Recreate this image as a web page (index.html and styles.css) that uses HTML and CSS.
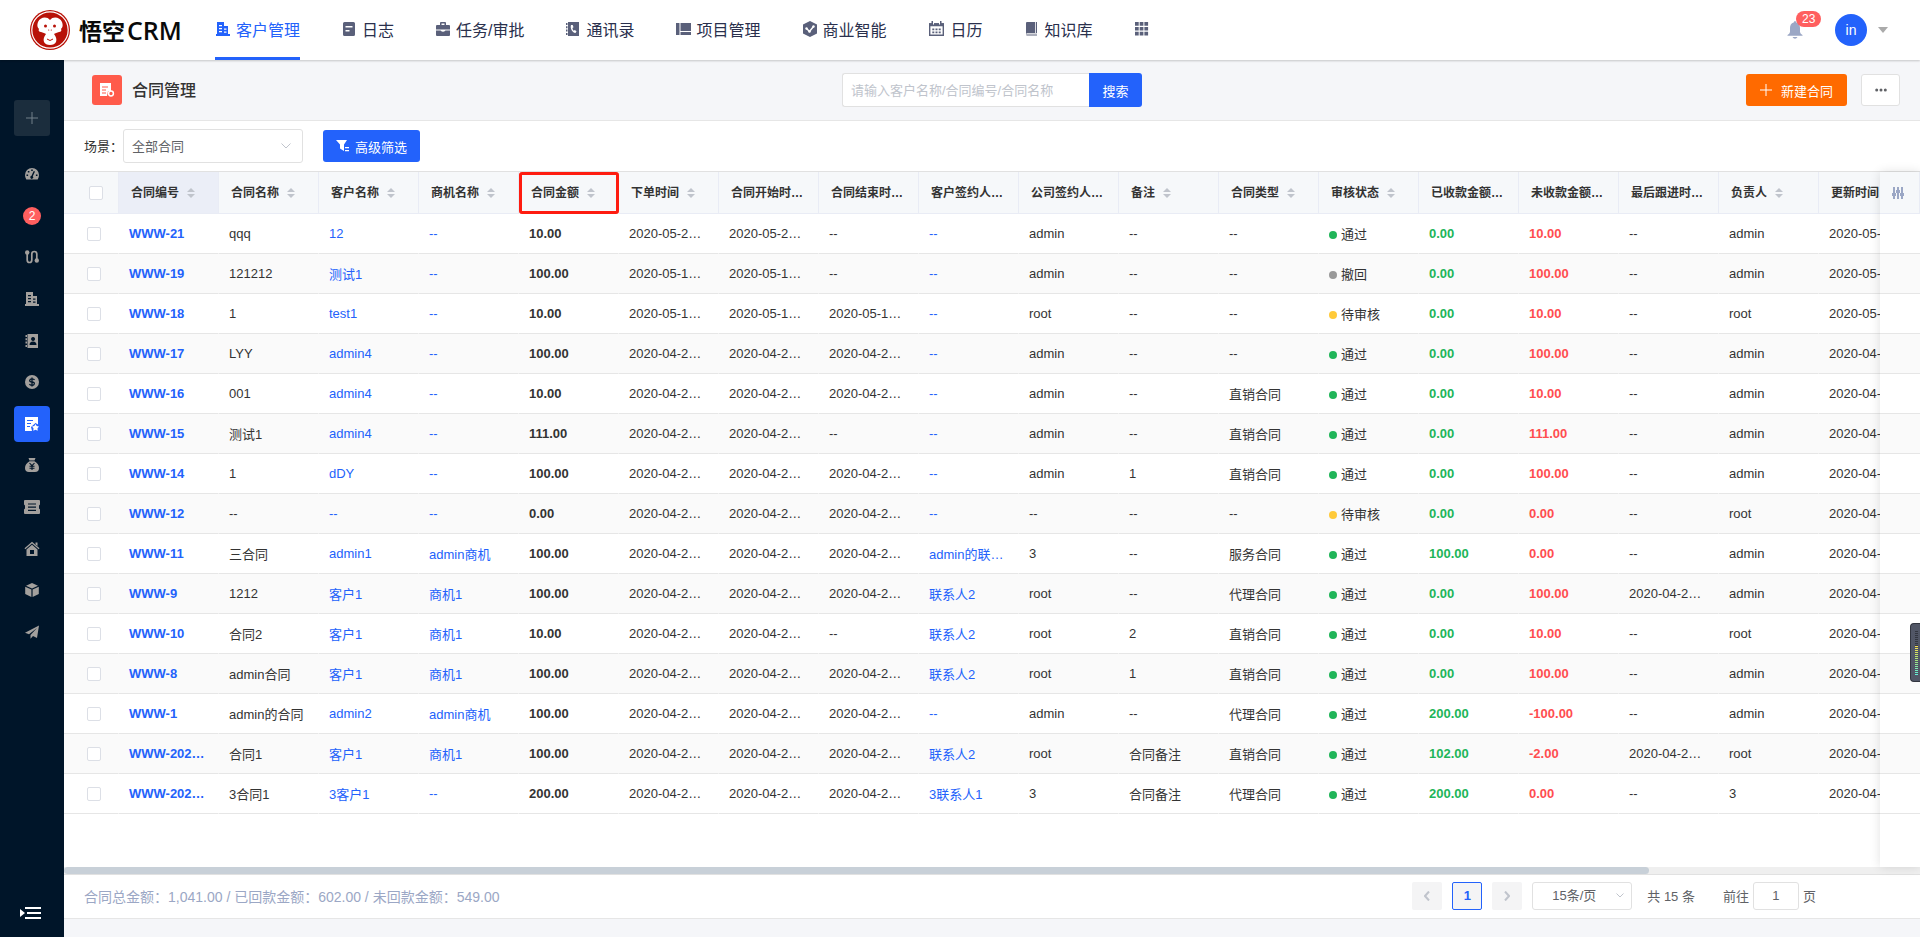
FILE: index.html
```
<!DOCTYPE html>
<html lang="zh-CN">
<head>
  <meta charset="UTF-8">
  <meta name="viewport" content="width=device-width, initial-scale=1.0">
  <title>悟空CRM - 合同管理</title>
  <link rel="stylesheet" href="styles.css">
</head>
<body>
  <header class="navbar">
    <div class="logo">
      <svg width="40" height="40" viewBox="0 0 40 40">
        <circle cx="20" cy="20" r="20" fill="#b81208"/>
        <circle cx="20" cy="20" r="18.2" fill="none" stroke="#fff" stroke-width="1.2"/>
        <path d="M20 10c-3-4-10-3-12 2-1 3-1 5 1 7-1 1 0 3 2 3 2 1 4 1 5 2-2 3-3 5-2 8 1 2 3 3 6 3s5-1 6-3c1-3 0-5-2-8 1-1 3-1 5-2 2 0 3-2 2-3 2-2 2-4 1-7-2-5-9-6-12-2z" fill="#fff"/>
        <circle cx="15.500" cy="16" r="1.500" fill="#b81208"/>
        <circle cx="24.500" cy="16" r="1.500" fill="#b81208"/>
        <circle cx="18.700" cy="20" r=".6" fill="#b81208"/>
        <circle cx="21.300" cy="20" r=".6" fill="#b81208"/>
        <path d="M17 29q3 3 6 0" fill="none" stroke="#b81208" stroke-width="1"/>
      </svg>
      <div class="logo-text">悟空<span>CRM</span></div>
    </div>
    <nav class="nav">
      <a href="#" class="nav-item active">
        <svg width="16" height="16" viewBox="0 0 16 16"><path fill-rule="evenodd" d="M2 1h7v4h4v8h2v2H1v-2h1zM4 4v1.300h3V4zm0 3v1.300h3V7zm0 3v1.300h3V10zm5-2.500v1.200h2.500V7.500zm0 3v1.200h2.500v-1.200z"/></svg>
        客户管理
      </a>
      <a href="#" class="nav-item">
        <svg width="16" height="16" viewBox="0 0 16 16"><path fill-rule="evenodd" d="M3.500 1h9q1.500 0 1.500 1.500v11q0 1.500-1.500 1.500h-9Q2 15 2 13.500v-11Q2 1 3.500 1zM4.500 5v1.500h7V5zm0 4v1.500h4V9z"/></svg>
        日志
      </a>
      <a href="#" class="nav-item">
        <svg width="16" height="16" viewBox="0 0 16 16"><path fill-rule="evenodd" d="M5 4V2q0-1 1-1h4q1 0 1 1v2h3q1 0 1 1v3.500H1V5q0-1 1-1zm1.500 0h3V2.500h-3zM1 9.500h4.500q2.500 2.500 5 0H15V14q0 1-1 1H2q-1 0-1-1z"/></svg>
        任务/审批
      </a>
      <a href="#" class="nav-item">
        <svg width="16" height="16" viewBox="0 0 16 16"><path fill-rule="evenodd" d="M3 1h11v14H3zM1 2h1.500v2H1zm0 3.300h1.500v2H1zm0 3.300h1.500v2H1zm0 3.300h1.500v2H1zM6 4c-1 3 1 7.500 4.500 8l1-1.700-1.700-1.200-1 .7C8 9 7.500 8 7.500 7l1-.7L7.700 4z"/></svg>
        通讯录
      </a>
      <a href="#" class="nav-item">
        <svg width="16" height="16" viewBox="0 0 16 16"><path d="M0 2h3.500v12H0zM4.500 2H15v8H4.500zM4.500 11H15v3H4.500z"/></svg>
        项目管理
      </a>
      <a href="#" class="nav-item">
        <svg width="16" height="16" viewBox="0 0 16 16"><path d="M8 0l7 3.500v9L8 16l-7-3.500v-9z"/><path d="M4.500 7.500l3 3 4-5" fill="none" stroke="#fff" stroke-width="1.500"/><circle cx="4.500" cy="7.500" r="1.200" fill="#fff"/><circle cx="7.500" cy="10.500" r="1.300" fill="#fff"/><circle cx="11.500" cy="5.500" r="1.200" fill="#fff"/></svg>
        商业智能
      </a>
      <a href="#" class="nav-item">
        <svg width="18" height="16" viewBox="0 0 18 16"><path d="M1.700 3h13.600v11.300H1.700z" fill="none" stroke="#5a607a" stroke-width="1.400"/><path d="M1 2.300h15v3H1zM4.300 7.500h2v1.700h-2zM7.500 7.500h2v1.700h-2zM10.700 7.500h2v1.700h-2zM4.300 10.500h2v1.700h-2zM7.500 10.500h2v1.700h-2zM10.700 10.500h2v1.700h-2zM3.500 0h1.500v3H3.500zM12 0h1.500v3H12z"/><path d="M5 1h1v2.500H5zM11 1h1v2.500h-1z" fill="#fff"/></svg>
        日历
      </a>
      <a href="#" class="nav-item">
        <svg width="16" height="16" viewBox="0 0 16 16"><path d="M3 1h8v11H3l-1 1V2q0-1 1-1zM11.800 1H13v11h-1.200z"/><path d="M2 13q0-.5 1-.5h10V15H3q-1 0-1-2z" opacity=".5"/></svg>
        知识库
      </a>
      <a href="#" class="nav-item" aria-label="更多应用">
        <svg width="16" height="16" viewBox="0 0 16 16"><path d="M1 1h3.700v3.700H1zM5.700 1h3.700v3.700H5.700zM10.400 1h3.700v3.700h-3.700zM1 5.900h3.700v3.700H1zM5.700 5.900h3.700v3.700H5.700zM10.400 5.900h3.700v3.700h-3.700zM1 10.800h3.700v3.700H1zM5.700 10.800h3.700v3.700H5.700zM10.400 10.800h3.700v3.700h-3.700z"/></svg>
      </a>
    </nav>
    <div class="user-area">
      <button class="bell" aria-label="消息">
        <svg width="16" height="18" viewBox="0 0 16 18"><path d="M8 0q1 0 1.300 1.500C12 2 13 4.500 13 7v4q.3 2 2.500 3v.800H.5V14Q2.700 13 3 11V7c0-2.500 1-5 3.700-5.500Q7 0 8 0zM5.500 16h5q-1 1.700-2.500 1.700T5.500 16z"/></svg>
        <span class="badge">23</span>
      </button>
      <div class="avatar">in</div>
      <span class="caret"></span>
    </div>
  </header>

  <div class="container">
    <aside class="sidebar">
      <button class="side-add" aria-label="新建">
        <svg width="12" height="12" viewBox="0 0 12 12"><path d="M5.500 0h1v12h-1zM0 5.500h12v1H0z"/></svg>
      </button>
      <nav class="side-menu">
        <a href="#" class="side-item" aria-label="仪表盘"><svg width="16" height="16" viewBox="0 0 16 16"><path fill-rule="evenodd" d="M8 2a7 7 0 0 1 7 7q0 2.500-1.300 4.500H2.300Q1 11.500 1 9a7 7 0 0 1 7-7zM7.200 3.500v1.500h1.600V3.500zM3.800 5v1.500h1.600V5zM2.500 8.500V10h1.600V8.500zm9.400 0V10h1.600V8.500zM9.700 5L7.500 9.800a1.500 1.500 0 1 0 1.300.4L11 5.500z"/></svg></a>
        <a href="#" class="side-item" aria-label="待办"><span class="side-badge">2</span></a>
        <a href="#" class="side-item" aria-label="线索"><svg width="16" height="16" viewBox="0 0 16 16"><circle cx="3.200" cy="3.500" r="2.200"/><circle cx="12.800" cy="11.500" r="2.200"/><path d="M3.200 4v7q0 2.500 2.300 2.500T7.800 11V5q0-2.500 2.500-2.500T12.800 5v6" fill="none" stroke="#a3a09d" stroke-width="1.700"/></svg></a>
        <a href="#" class="side-item" aria-label="客户"><svg width="16" height="16" viewBox="0 0 16 16"><path fill-rule="evenodd" d="M2 1h7v4h4v8h2v2H1v-2h1zM4 4v1.300h3V4zm0 3v1.300h3V7zm0 3v1.300h3V10zm5-2.500v1.200h2.500V7.500zm0 3v1.200h2.500v-1.200z"/></svg></a>
        <a href="#" class="side-item" aria-label="联系人"><svg width="16" height="16" viewBox="0 0 16 16"><path fill-rule="evenodd" d="M3.500 1H14v14H3.500zM1.500 2H3v2H1.500zm0 3.300H3v2H1.500zm0 3.300H3v2H1.500zm0 3.300H3v2H1.500zM9 4a2 2 0 1 0 .1 0zM5.500 12h7q0-3.500-3.500-3.500T5.500 12z"/></svg></a>
        <a href="#" class="side-item" aria-label="商机"><svg width="16" height="16" viewBox="0 0 16 16"><circle cx="8" cy="8" r="7"/><path d="M10.500 6Q10 4.800 8 4.800T5.700 6.300 8 8t2.300 1.800T8 11.300 5.500 10M8 3.500v9" fill="none" stroke="#001529" stroke-width="1.300"/></svg></a>
        <a href="#" class="side-item active" aria-label="合同"><svg width="16" height="16" viewBox="0 0 16 16"><path d="M1 1h13v7.500L11.500 7 7 11l1 4H1z"/><path d="M3 4.500h6M3 7.500h4M3 10.500h3" stroke="#2362fb" stroke-width="1.200"/><path d="M11.500 8l1.200 2 2.300.5-1.500 1.800.2 2.500-2.200-1-2.200 1 .2-2.500L8 10.500l2.300-.5z"/></svg></a>
        <a href="#" class="side-item" aria-label="回款"><svg width="16" height="16" viewBox="0 0 16 16"><path d="M4.500 1h7L10.500 3.500h-5zM5.500 4.300h5C13.500 6 15 8.500 15 11q0 4-4 4H5q-4 0-4-4c0-2.500 1.500-5 4.500-6.700z"/><path d="M5.500 6L8 8.700 10.500 6M8 8.700V13M5.500 9.200h5M5.500 11.200h5" fill="none" stroke="#001529" stroke-width="1.100"/></svg></a>
        <a href="#" class="side-item" aria-label="发票"><svg width="18" height="16" viewBox="0 0 18 16"><path d="M2 1h14q1 0 1 1v3.500l-1 1v3l1 1V14q0 1-1 1H2q-1 0-1-1v-3.500l1-1v-3l-1-1V2q0-1 1-1z"/><path d="M5 5h8M5 8.200h8M5 11.400h8" stroke="#001529" stroke-width="1.200"/></svg></a>
        <a href="#" class="side-item" aria-label="公海"><svg width="16" height="16" viewBox="0 0 16 16"><path d="M8 .8l7.500 6.500-.8 1L8 2.500 1.300 8.300l-.8-1z"/><path fill-rule="evenodd" d="M8 3.800l5.500 4.700V15h-11V8.500zM6 9v4h4V9z"/><path d="M11.500 1.500h2V5l-2-1.500z"/></svg></a>
        <a href="#" class="side-item" aria-label="产品"><svg width="16" height="16" viewBox="0 0 16 16"><path d="M8 1l6 2.700L8 6.500 2 3.700zM1.200 4.800l6.200 2.800V15l-6.200-3zM14.800 4.800L8.600 7.600V15l6.200-3z"/></svg></a>
        <a href="#" class="side-item" aria-label="营销"><svg width="16" height="16" viewBox="0 0 16 16"><path d="M15 1.500l-2 12.500-4-2-2.500 2.800V11L13 4 5 10.300 1 8.800z"/></svg></a>
      </nav>
      <button class="side-toggle" aria-label="展开菜单">
        <svg width="22" height="14" viewBox="0 0 22 14"><path d="M0 3l5 4-5 4zM5 1h16v2H5zM7 6h14v2H7zM5 11h16v2H5z"/></svg>
      </button>
    </aside>

    <main class="main">
      <div class="page-head">
        <div class="page-title">
          <span class="title-icon">
            <svg width="18" height="18" viewBox="0 0 18 18"><path d="M2 2h11v8H10l-1 5H2z" fill="#fff"/><path d="M4 6h6M4 9h4M4 12h4" stroke="#ff5b4b" stroke-width="1"/><circle cx="13" cy="12.500" r="2.400" fill="#ff5b4b" stroke="#fff" stroke-width="1.500"/></svg>
          </span>
          <h1>合同管理</h1>
        </div>
        <form class="search">
          <input type="text" placeholder="请输入客户名称/合同编号/合同名称" aria-label="搜索合同">
          <button type="button">搜索</button>
        </form>
        <div class="head-actions">
          <button class="btn btn-orange">
            <svg width="12" height="12" viewBox="0 0 12 12"><path d="M5.500 0h1v12h-1zM0 5.500h12v1H0z"/></svg>
            新建合同
          </button>
          <button class="btn btn-more" aria-label="更多">
            <svg width="12" height="4" viewBox="0 0 12 4"><circle cx="1.700" cy="2" r="1.500"/><circle cx="6" cy="2" r="1.500"/><circle cx="10.300" cy="2" r="1.500"/></svg>
          </button>
        </div>
      </div>

      <div class="filter-bar">
        <label for="scene">场景：</label>
        <div class="select-wrap scene-select">
          <select id="scene"><option>全部合同</option></select>
          <svg width="10" height="6" viewBox="0 0 10 6"><path d="M.5.5L5 5 9.500.5"/></svg>
        </div>
        <button class="btn btn-primary">
          <svg width="14" height="14" viewBox="0 0 14 14"><path d="M0 1h11L8 5.500V12L4 9.500V5.500zM9 8h4v1.300H9zM9 11h4v1.300H9z"/></svg>
          高级筛选
        </button>
      </div>

      <div class="table-area">
        <div class="table-scroll">
          <table class="contract-table">
            <thead><tr id="table-head"></tr></thead>
            <tbody id="table-body"></tbody>
          </table>
        </div>
        <div class="fixed-column">
          <div class="fixed-head">
            <svg width="14" height="14" viewBox="0 0 14 14"><path d="M2 1h2v12H2zM6 1h2v12H6zM10 1h2v12h-2zM1 7h4v3H1zM5 4h4v3H5zM9 7h4v3H9z"/></svg>
          </div>
          <div id="fixed-rows"></div>
        </div>
        <div class="scrollbar"><div class="scrollbar-thumb"></div></div>
      </div>

      <div class="table-footer">
        <div class="summary">合同总金额：1,041.00 / 已回款金额：602.00 / 未回款金额：549.00</div>
        <div class="pagination">
          <button class="page-btn" disabled aria-label="上一页"><svg width="6" height="10" viewBox="0 0 6 10"><path d="M5 .5L1 5l4 4.500"/></svg></button>
          <button class="page-btn current">1</button>
          <button class="page-btn" disabled aria-label="下一页"><svg width="6" height="10" viewBox="0 0 6 10"><path d="M1 .5L5 5 1 9.500"/></svg></button>
          <div class="select-wrap size-select">
            <select aria-label="每页条数"><option>15条/页</option></select>
            <svg width="8" height="5" viewBox="0 0 8 5"><path d="M.5.500L4 4 7.500.5"/></svg>
          </div>
          <span class="total">共 15 条</span>
          <label class="jumper">前往<input type="text" value="1">页</label>
        </div>
      </div>
    </main>
  </div>

  <div class="meter"><span class="meter-off"></span><span class="meter-on"></span></div>

  <script src="table.js"></script>
</body>
</html>
```

FILE: styles.css
```
* {
  box-sizing: border-box;
}
body {
  margin: 0;
  height: 100vh;
  display: flex;
  flex-direction: column;
  overflow: hidden;
  font-family: "Liberation Sans", "Noto Sans CJK SC", sans-serif;
  font-size: 13px;
  color: #333;
  background: #f5f6f9;
}
a {
  text-decoration: none;
  color: inherit;
}
button,
input,
select {
  font: inherit;
  color: inherit;
}
button {
  border: none;
  padding: 0;
  cursor: pointer;
}
svg {
  flex: none;
  fill: currentColor;
}

/* top bar */
.navbar {
  display: flex;
  height: 60px;
  flex: none;
  padding: 0 32px 0 30px;
  background: #fff;
  box-shadow: 0 1px 2px rgba(0, 0, 0, 0.2);
  position: relative;
  z-index: 5;
}
.logo {
  display: flex;
  align-items: center;
  gap: 9px;
  width: 185px;
}
.logo-text {
  display: flex;
  align-items: center;
  gap: 2px;
  font-family: "Noto Sans CJK SC", sans-serif;
  font-size: 23px;
  font-weight: 700;
  line-height: 30px;
  color: #0a0a0a;
}
.logo-text span {
  font-family: "Open Sans", sans-serif;
  font-size: 25px;
  font-weight: 600;
}
.nav {
  display: flex;
  gap: 41px;
}
.nav-item {
  display: flex;
  align-items: center;
  gap: 5px;
  font-size: 16px;
  color: #2a304d;
  border-bottom: 3px solid transparent;
  border-top: 1px solid transparent;
}
.nav-item svg {
  color: #5a607a;
}
.nav-item.active,
.nav-item.active svg {
  color: #2362fb;
}
.nav-item.active {
  border-bottom-color: #2362fb;
}
.user-area {
  display: flex;
  align-items: center;
  margin-left: auto;
}
.bell {
  position: relative;
  display: flex;
  margin-right: 32px;
  background: none;
  color: #9ba7c5;
}
.badge {
  position: absolute;
  left: 9px;
  top: -10px;
  height: 16px;
  padding: 0 6px;
  border-radius: 8px;
  background: #ff5f5f;
  color: #fff;
  font-size: 12px;
  line-height: 16px;
}
.avatar {
  width: 32px;
  height: 32px;
  border-radius: 50%;
  background: #2362fb;
  color: #fff;
  font-size: 14px;
  line-height: 32px;
  text-align: center;
}
.caret {
  margin-left: 11px;
  border: 5px solid transparent;
  border-top: 6px solid #aaa;
  border-bottom: 0;
}

.container {
  display: flex;
  flex: 1;
  min-height: 0;
}

/* sidebar */
.sidebar {
  display: flex;
  flex-direction: column;
  align-items: flex-start;
  width: 64px;
  flex: none;
  padding: 40px 0 17px 14px;
  background: #001529;
}
.side-add {
  display: flex;
  align-items: center;
  justify-content: center;
  width: 36px;
  height: 36px;
  margin-bottom: 20px;
  border-radius: 3px;
  background: #1b2d3d;
  color: #73808a;
}
.side-menu {
  display: flex;
  flex-direction: column;
  justify-content: space-between;
  height: 494px;
}
.side-item {
  display: flex;
  align-items: center;
  justify-content: center;
  width: 36px;
  height: 36px;
  border-radius: 4px;
  color: #a3a09d;
}
.side-item.active {
  background: #2362fb;
  color: #fff;
}
.side-badge {
  width: 18px;
  height: 18px;
  border-radius: 9px;
  background: #ff5f5f;
  color: #fff;
  font-size: 12px;
  line-height: 18px;
  text-align: center;
}
.side-toggle {
  display: flex;
  margin-top: auto;
  margin-left: 6px;
  background: none;
  color: #fff;
}

/* page head */
.main {
  display: flex;
  flex-direction: column;
  flex: 1;
  min-width: 0;
  padding-bottom: 18px;
}
.page-head {
  display: grid;
  grid-template-columns: 1fr auto 1fr;
  align-items: center;
  height: 61px;
  flex: none;
  padding: 0 20px;
  border-bottom: 1px solid #e6e6e6;
}
.page-title {
  display: flex;
  align-items: center;
  gap: 10px;
  padding-left: 8px;
}
.title-icon {
  display: flex;
  align-items: center;
  justify-content: center;
  width: 30px;
  height: 30px;
  border-radius: 3px;
  background: #ff5b4b;
}
.page-title h1 {
  margin: 0;
  padding-bottom: 2px;
  font-size: 16px;
  font-weight: 500;
}
.search {
  display: flex;
  height: 34px;
}
.search input {
  width: 247px;
  padding: 0 8px;
  border: 1px solid #e1e1e1;
  border-right: none;
  border-radius: 3px 0 0 3px;
  background: #fff;
}
.search input::placeholder {
  color: #c0c4cc;
}
.search button {
  width: 53px;
  border-radius: 0 3px 3px 0;
  background: #2362fb;
  color: #fff;
}
.head-actions {
  display: flex;
  justify-content: flex-end;
  gap: 14px;
}
.btn {
  display: flex;
  align-items: center;
  justify-content: center;
  height: 32px;
  border-radius: 3px;
  color: #fff;
}
.btn-orange {
  gap: 9px;
  width: 101px;
  background: #ff6a00;
}
.btn-more {
  width: 39px;
  border: 1px solid #e1e1e1;
  background: #fff;
  color: #606266;
}
.btn-primary {
  gap: 5px;
  width: 97px;
  background: #2362fb;
}

/* filter bar */
.filter-bar {
  display: flex;
  align-items: center;
  height: 50px;
  flex: none;
  padding-left: 20px;
  background: #fff;
}
.filter-bar label {
  width: 39px;
  padding-bottom: 2px;
}
.select-wrap {
  position: relative;
}
.select-wrap select {
  width: 100%;
  height: 100%;
  border: 1px solid #e1e1e1;
  border-radius: 3px;
  background: #fff;
  color: #606266;
  appearance: none;
}
.select-wrap svg {
  position: absolute;
  top: 50%;
  margin-top: -3px;
  fill: none;
  stroke: #c0c4cc;
  pointer-events: none;
}
.scene-select {
  width: 180px;
  height: 34px;
  margin-right: 20px;
}
.scene-select select {
  padding: 0 8px;
}
.scene-select svg {
  right: 12px;
}

/* table */
.table-area {
  position: relative;
  display: flex;
  flex-direction: column;
  flex: 1;
  min-height: 0;
  background: #fff;
  border-top: 1px solid #e1e1e1;
}
.table-scroll {
  flex: 1;
  min-height: 0;
  overflow: hidden;
}
.contract-table {
  width: 1855px;
  table-layout: fixed;
  border-spacing: 0;
}
.contract-table th,
.contract-table td {
  overflow: hidden;
  text-align: left;
  text-overflow: ellipsis;
  white-space: nowrap;
  vertical-align: middle;
}
.contract-table th {
  width: 100px;
  height: 42px;
  padding: 0 12px 3px;
  border-right: 1px solid #e9ecf5;
  border-bottom: 1px solid #e9ecf5;
  background: #f6f8fa;
  font-size: 12px;
  font-weight: 700;
}
.contract-table td {
  height: 40px;
  padding: 0 10px 1px;
  border-right: 1px solid transparent;
  border-bottom: 1px solid #e6e6e6;
}
.contract-table tr:nth-child(even) td,
.fixed-row:nth-child(even) {
  background: #fafafa;
}
.contract-table .check-cell {
  width: 55px;
  padding: 0 0 0 23px;
}
.contract-table th.check-cell {
  padding-left: 25px;
}
.contract-table th.sorted {
  background: #ebeef7;
}
.contract-table th.marked {
  position: relative;
  outline: 3px solid #fe1c10;
  outline-offset: -3px;
  border-radius: 3px;
}
.contract-table input {
  display: block;
  width: 14px;
  height: 14px;
  margin: 0;
  border: 1px solid #dcdfe6;
  border-radius: 2px;
  background: #fff;
  appearance: none;
}
.sort {
  display: inline-flex;
  flex-direction: column;
  gap: 2px;
  width: 24px;
  padding-left: 8px;
  vertical-align: middle;
}
.sort::before,
.sort::after {
  content: "";
  width: 0;
  border: 4px solid transparent;
}
.sort::before {
  border-top: 0;
  border-bottom-color: #c0c4cc;
}
.sort::after {
  border-bottom: 0;
  border-top-color: #c0c4cc;
}
.num {
  font-weight: 700;
  color: #2362fb;
}
.link {
  color: #2362fb;
}
.money {
  font-weight: 700;
}
.received {
  font-weight: 700;
  color: #20b559;
}
.unreceived {
  font-weight: 700;
  color: #ff4d4f;
}
.dot {
  display: inline-block;
  width: 8px;
  height: 8px;
  margin-right: 4px;
  border-radius: 50%;
}
.dot-pass {
  background: #20b559;
}
.dot-back {
  background: #999;
}
.dot-wait {
  background: #ffca3a;
}
.fixed-column {
  position: absolute;
  top: 0;
  right: 0;
  bottom: 7px;
  width: 40px;
  background: #fff;
  box-shadow: 0 0 10px rgba(0, 0, 0, 0.12);
}
.fixed-head {
  display: flex;
  align-items: center;
  justify-content: center;
  height: 42px;
  padding-right: 4px;
  border-right: 1px solid #e9ecf5;
  border-bottom: 1px solid #e9ecf5;
  background: #f6f8fa;
  color: #9ba7c5;
}
.fixed-row {
  height: 40px;
  border-bottom: 1px solid #e6e6e6;
}
.scrollbar {
  height: 7px;
  flex: none;
  background: #efefef;
}
.scrollbar-thumb {
  width: 85.4%;
  height: 7px;
  border-radius: 4px;
  background: #c8d0d8;
}

/* footer */
.table-footer {
  display: flex;
  align-items: center;
  justify-content: space-between;
  height: 45px;
  flex: none;
  padding: 0 104px 2px 20px;
  background: #fff;
  border-top: 1px solid #e1e1e1;
  border-bottom: 1px solid #e6e6e6;
}
.summary {
  font-size: 14px;
  color: #9ba7c5;
}
.pagination {
  display: flex;
  align-items: center;
  gap: 10px;
  color: #606266;
}
.page-btn {
  display: flex;
  align-items: center;
  justify-content: center;
  width: 30px;
  height: 28px;
  border-radius: 2px;
  background: #f4f4f5;
  color: #c0c4cc;
}
.page-btn svg {
  fill: none;
  stroke: #c0c4cc;
  stroke-width: 2;
}
.page-btn.current {
  border: 1px solid #2362fb;
  background: #f4f4f5;
  color: #2362fb;
  font-weight: 700;
}
.size-select {
  width: 100px;
  height: 28px;
}
.size-select select {
  padding: 0 19px;
}
.size-select svg {
  right: 8px;
}
.total {
  margin: 0 18px 0 5px;
}
.jumper {
  display: flex;
  align-items: center;
  gap: 4px;
}
.jumper input {
  width: 46px;
  height: 28px;
  padding: 0;
  border: 1px solid #e1e1e1;
  border-radius: 3px;
  background: #fff;
  text-align: center;
}

/* floating level meter on the right edge */
.meter {
  position: absolute;
  right: 0;
  top: 623px;
  z-index: 6;
  width: 10px;
  height: 59px;
  padding: 7px 2px 7px 4px;
  border: 1px solid #32353f;
  border-right: none;
  border-radius: 4px 0 0 4px;
  background: #515666;
}
.meter-off,
.meter-on {
  display: block;
}
.meter-off {
  height: 15px;
  background: repeating-linear-gradient(#32353f 0 1px, #515666 1px 2px);
}
.meter-on {
  height: 29px;
  background: repeating-linear-gradient(transparent 0 1px, #515666 1px 2px), linear-gradient(#ffe24a, #a4e57c, #5ff0dc);
}
```

FILE: table.js
```
const columns = ['合同编号', '合同名称', '客户名称', '商机名称', '合同金额', '下单时间', '合同开始时间', '合同结束时间', '客户签约人', '公司签约人', '备注', '合同类型', '审核状态', '已收款金额', '未收款金额', '最后跟进时间', '负责人', '更新时间'];

const cellClass = { 0: 'num', 2: 'link', 3: 'link', 4: 'money', 8: 'link', 13: 'received', 14: 'unreceived' };

const dots = { '通过': 'pass', '撤回': 'back', '待审核': 'wait' };

const may2 = '2020-05-21 00:00';
const may1 = '2020-05-14 00:00';
const apr = '2020-04-24 00:00';

const rows = [
  ['WWW-21', 'qqq', '12', '--', '10.00', may2, may2, '--', '--', 'admin', '--', '--', '通过', '0.00', '10.00', '--', 'admin', may2],
  ['WWW-19', '121212', '测试1', '--', '100.00', may1, may1, '--', '--', 'admin', '--', '--', '撤回', '0.00', '100.00', '--', 'admin', may2],
  ['WWW-18', '1', 'test1', '--', '10.00', may1, may1, may1, '--', 'root', '--', '--', '待审核', '0.00', '10.00', '--', 'root', may1],
  ['WWW-17', 'LYY', 'admin4', '--', '100.00', apr, apr, apr, '--', 'admin', '--', '--', '通过', '0.00', '100.00', '--', 'admin', apr],
  ['WWW-16', '001', 'admin4', '--', '10.00', apr, apr, apr, '--', 'admin', '--', '直销合同', '通过', '0.00', '10.00', '--', 'admin', apr],
  ['WWW-15', '测试1', 'admin4', '--', '111.00', apr, apr, '--', '--', 'admin', '--', '直销合同', '通过', '0.00', '111.00', '--', 'admin', apr],
  ['WWW-14', '1', 'dDY', '--', '100.00', apr, apr, apr, '--', 'admin', '1', '直销合同', '通过', '0.00', '100.00', '--', 'admin', apr],
  ['WWW-12', '--', '--', '--', '0.00', apr, apr, apr, '--', '--', '--', '--', '待审核', '0.00', '0.00', '--', 'root', apr],
  ['WWW-11', '三合同', 'admin1', 'admin商机', '100.00', apr, apr, apr, 'admin的联系人', '3', '--', '服务合同', '通过', '100.00', '0.00', '--', 'admin', apr],
  ['WWW-9', '1212', '客户1', '商机1', '100.00', apr, apr, apr, '联系人2', 'root', '--', '代理合同', '通过', '0.00', '100.00', apr, 'admin', apr],
  ['WWW-10', '合同2', '客户1', '商机1', '10.00', apr, apr, '--', '联系人2', 'root', '2', '直销合同', '通过', '0.00', '10.00', '--', 'root', apr],
  ['WWW-8', 'admin合同', '客户1', '商机1', '100.00', apr, apr, apr, '联系人2', 'root', '1', '直销合同', '通过', '0.00', '100.00', '--', 'admin', apr],
  ['WWW-1', 'admin的合同', 'admin2', 'admin商机', '100.00', apr, apr, apr, '--', 'admin', '--', '代理合同', '通过', '200.00', '-100.00', '--', 'admin', apr],
  ['WWW-20200421', '合同1', '客户1', '商机1', '100.00', apr, apr, apr, '联系人2', 'root', '合同备注', '直销合同', '通过', '102.00', '-2.00', apr, 'root', apr],
  ['WWW-20200420', '3合同1', '3客户1', '--', '200.00', apr, apr, apr, '3联系人1', '3', '合同备注', '代理合同', '通过', '200.00', '0.00', '--', '3', apr]
];

const checkbox = (label) => `<input type="checkbox" aria-label="${label}">`;

// Header
const headClass = { 0: 'sorted', 4: 'marked' };
document.getElementById('table-head').innerHTML =
  `<th class="check-cell">${checkbox('全选')}</th>` +
  columns.map((name, i) => `<th class="${headClass[i] || ''}">${name}<span class="sort"></span></th>`).join('');

// Body
const renderCell = (value, i) => {
  if (i === 12) {
    return `<td><span class="dot dot-${dots[value]}"></span>${value}</td>`;
  }
  return `<td class="${cellClass[i] || ''}">${value}</td>`;
};

document.getElementById('table-body').innerHTML = rows.map((row) =>
  `<tr><td class="check-cell">${checkbox(row[0])}</td>${row.map(renderCell).join('')}</tr>`
).join('');

document.getElementById('fixed-rows').innerHTML = rows.map(() => '<div class="fixed-row"></div>').join('');
```
